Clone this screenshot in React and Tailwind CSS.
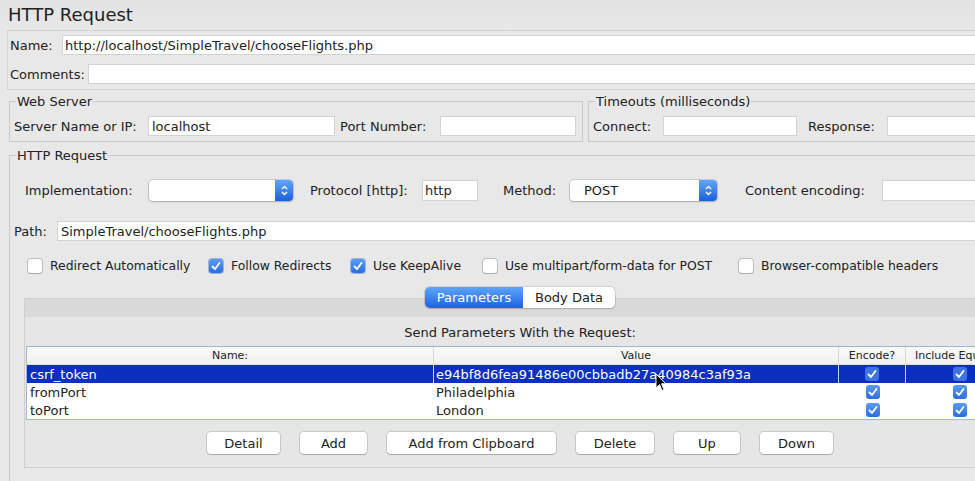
import React from "react";

const CheckMark = ({ className = "" }) => (
  <svg viewBox="0 0 14 14" className={className}>
    <path d="M3.5 7.5 L6 10 L10.5 4" fill="none" stroke="white" strokeWidth="1.8" strokeLinecap="round" strokeLinejoin="round" />
  </svg>
);

function Box({ checked }) {
  if (checked) {
    return (
      <div className="w-[14px] h-[14px] shrink-0 rounded-[3px] bg-linear-to-b from-[#5b9cf2] to-[#2a6fe0] shadow-[0_0_0_1px_rgba(30,80,180,0.35)] flex items-center justify-center">
        <CheckMark className="w-[14px] h-[14px]" />
      </div>
    );
  }
  return <div className="w-[14px] h-[14px] shrink-0 rounded-[3px] bg-white shadow-[0_0_0_1px_rgba(0,0,0,0.18),0_1px_1px_rgba(0,0,0,0.1)]" />;
}

function Field({ w, value, className = "" }) {
  return (
    <div
      className={`h-[20px] bg-white border border-[#d2d2d2] flex items-center pl-[2px] whitespace-nowrap ${w || "flex-1"} ${className}`}
    >
      {value}
    </div>
  );
}

function Select({ w, value }) {
  return (
    <div className={`flex h-[21px] ${w} rounded-[4px] bg-white shadow-[0_0_0_1px_rgba(0,0,0,0.12),0_1px_2px_rgba(0,0,0,0.18)]`}>
      <div className="flex-1 pl-[14px] flex items-center">{value}</div>
      <div className="w-[18px] rounded-r-[4px] bg-linear-to-b from-[#63a6f8] to-[#1d5fdc] flex items-center justify-center">
        <svg viewBox="0 0 10 14" className="w-[9px] h-[13px]">
          <path d="M2.5 5 L5 2.5 L7.5 5 M2.5 9 L5 11.5 L7.5 9" fill="none" stroke="white" strokeWidth="1.4" strokeLinecap="round" strokeLinejoin="round" />
        </svg>
      </div>
    </div>
  );
}

function Btn({ w, children }) {
  return (
    <div className={`${w} h-[22px] rounded-[4px] bg-white shadow-[0_0_0_1px_rgba(0,0,0,0.12),0_1px_1px_rgba(0,0,0,0.18)] flex items-center justify-center`}>
      {children}
    </div>
  );
}

const rows = [
  { name: "csrf_token", value: "e94bf8d6fea91486e00cbbadb27a40984c3af93a", selected: true },
  { name: "fromPort", value: "Philadelphia" },
  { name: "toPort", value: "London" },
];

const options = [
  ["Redirect Automatically", false, "w-[181px]"],
  ["Follow Redirects", true, "w-[142px]"],
  ["Use KeepAlive", true, "w-[132px]"],
  ["Use multipart/form-data for POST", false, "w-[256px]"],
  ["Browser-compatible headers", false, "w-[230px]"],
];

function TableCheck({ selected }) {
  return (
    <div
      className={`w-[14px] h-[14px] rounded-[3px] flex items-center justify-center ${
        selected ? "bg-[#3f73e4]" : "bg-linear-to-b from-[#5b9cf2] to-[#2a6fe0]"
      }`}
    >
      <CheckMark className="w-[14px] h-[14px]" />
    </div>
  );
}

export default function App() {
  return (
    <div className="w-[975px] h-[481px] overflow-hidden bg-[#e8e8e8] text-[13px] leading-[15px] text-[#222] font-['DejaVu_Sans',sans-serif] relative">
      <div className="w-[1040px]">
        {/* title */}
        <div className="h-[28px] pl-[8px] flex items-center text-[18px] bg-linear-to-b from-[#e2e2e2] to-[#e8e8e8]">HTTP Request</div>

        {/* name + comments */}
        <div className="ml-[7px] mt-[2px] border border-[#d3d3d3] border-r-0 pl-[2px] pt-[4px] pb-[5px] flex flex-col gap-[9px]">
          <div className="flex items-center">
            <div className="w-[52px]">Name:</div>
            <Field value="http://localhost/SimpleTravel/chooseFlights.php" className="pl-[1px]" />
          </div>
          <div className="flex items-center">
            <div className="w-[78px]">Comments:</div>
            <Field value="" className="h-[19px]" />
          </div>
        </div>

        {/* web server + timeouts */}
        <div className="flex mt-[4px] ml-[9px]">
          <fieldset className="w-[574px] border border-[#c9c9c9] pl-[4px] pr-[5px] pb-[5px]">
            <legend className="ml-[2px] px-[1px]">Web Server</legend>
            <div className="flex items-center mt-[7px]">
              <div className="w-[134px]">Server Name or IP:</div>
              <Field w="w-[187px]" value="localhost" className="pl-[3px]" />
              <div className="w-[100px] ml-[5px]">Port Number:</div>
              <Field w="w-[136px]" value="" />
            </div>
          </fieldset>
          <fieldset className="flex-1 ml-[5px] border border-[#c9c9c9] border-r-0 pl-[4px] pb-[5px]">
            <legend className="ml-[2px] px-[1px]">Timeouts (milliseconds)</legend>
            <div className="flex items-center mt-[7px]">
              <div className="w-[70px]">Connect:</div>
              <Field w="w-[134px]" value="" />
              <div className="w-[79px] ml-[11px]">Response:</div>
              <Field value="" />
            </div>
          </fieldset>
        </div>

        {/* http request */}
        <fieldset className="ml-[9px] mt-[6px] w-[1022px] h-[340px] border border-[#c9c9c9]">
          <legend className="ml-[6px] px-[1px]">HTTP Request</legend>

          <div className="flex items-center mt-[17px] pl-[15px]">
            <div className="w-[124px]">Implementation:</div>
            <Select w="w-[144px]" value="" />
            <div className="w-[112px] ml-[17px]">Protocol [http]:</div>
            <Field w="w-[56px]" value="http" className="h-[21px] pl-[2px]" />
            <div className="w-[67px] ml-[25px]">Method:</div>
            <Select w="w-[147px]" value="POST" />
            <div className="w-[137px] ml-[28px]">Content encoding:</div>
            <Field value="" className="h-[21px]" />
          </div>

          <div className="flex items-center mt-[20px] pl-[4px]">
            <div className="w-[43px]">Path:</div>
            <Field value="SimpleTravel/chooseFlights.php" className="pl-[3px]" />
          </div>

          <div className="flex items-center mt-[17px] pl-[18px] text-[12.4px]">
            {options.map(([label, checked, w]) => (
              <div key={label} className={`flex items-center gap-[8px] ${w}`}>
                <Box checked={checked} />
                <span className="whitespace-nowrap">{label}</span>
              </div>
            ))}
          </div>

          {/* tabs */}
          <div className="mt-[14px] relative">
            <div className="relative z-10 flex justify-center -mb-[10px]">
              <div className="flex h-[21px] rounded-[5px] shadow-[0_0_0_1px_rgba(0,0,0,0.1),0_1px_2px_rgba(0,0,0,0.15)]">
                <div className="w-[98px] rounded-l-[5px] bg-linear-to-b from-[#5fa4f8] to-[#1b62e2] text-white flex items-center justify-center">Parameters</div>
                <div className="w-[92px] rounded-r-[5px] bg-white flex items-center justify-center">Body Data</div>
              </div>
            </div>
            <div className="mx-[14px] border border-[#d0d0d0] bg-[#e6e6e6]">
              <div className="h-[18px] bg-[#dadada]" />
              <div className="h-[29px] flex items-center justify-center pt-[2px]">Send Parameters With the Request:</div>
              <div className="mx-[1px] border-y border-l border-[#9db7df] bg-white">
                <div className="flex h-[18px] text-[11px] bg-linear-to-b from-[#fbfbfb] to-[#efefef] border-b border-[#dcdcdc]">
                  <div className="w-[407px] flex items-center justify-center border-r border-[#d8d8d8]">Name:</div>
                  <div className="w-[405px] flex items-center justify-center border-r border-[#d8d8d8]">Value</div>
                  <div className="w-[67px] flex items-center justify-center border-r border-[#d8d8d8]">Encode?</div>
                  <div className="flex-1 flex items-center pl-[9px]">Include Equals?</div>
                </div>
                {rows.map((r) => (
                  <div key={r.name} className={`flex h-[18px] ${r.selected ? "bg-[#0b2fc0] text-white" : ""}`}>
                    <div className={`w-[407px] pl-[3px] flex items-center ${r.selected ? "border-r border-[#c9d3f2]" : ""}`}>{r.name}</div>
                    <div className={`w-[405px] pl-[2px] flex items-center ${r.selected ? "border-r border-[#c9d3f2]" : ""}`}>{r.value}</div>
                    <div className={`w-[67px] flex items-center justify-center ${r.selected ? "border-r border-[#c9d3f2]" : ""}`}>
                      <TableCheck selected={r.selected} />
                    </div>
                    <div className="flex-1 flex items-center justify-center">
                      <TableCheck selected={r.selected} />
                    </div>
                  </div>
                ))}
              </div>
              <div className="flex justify-center gap-[20px] mt-[12px] pb-[13px]">
                <Btn w="w-[73px]">Detail</Btn>
                <Btn w="w-[67px]">Add</Btn>
                <Btn w="w-[169px]">Add from Clipboard</Btn>
                <Btn w="w-[78px]">Delete</Btn>
                <Btn w="w-[66px]">Up</Btn>
                <Btn w="w-[73px]">Down</Btn>
              </div>
            </div>
          </div>
        </fieldset>
      </div>

      {/* mouse pointer */}
      <svg viewBox="0 0 12 19" className="absolute left-[655px] top-[373px] w-[12px] h-[19px]">
        <path d="M1 1 L1 15 L4.5 11.5 L7 17.5 L9 16.6 L6.6 10.8 L11 10.8 Z" fill="black" stroke="white" strokeWidth="1" strokeLinejoin="round" />
      </svg>
    </div>
  );
}
